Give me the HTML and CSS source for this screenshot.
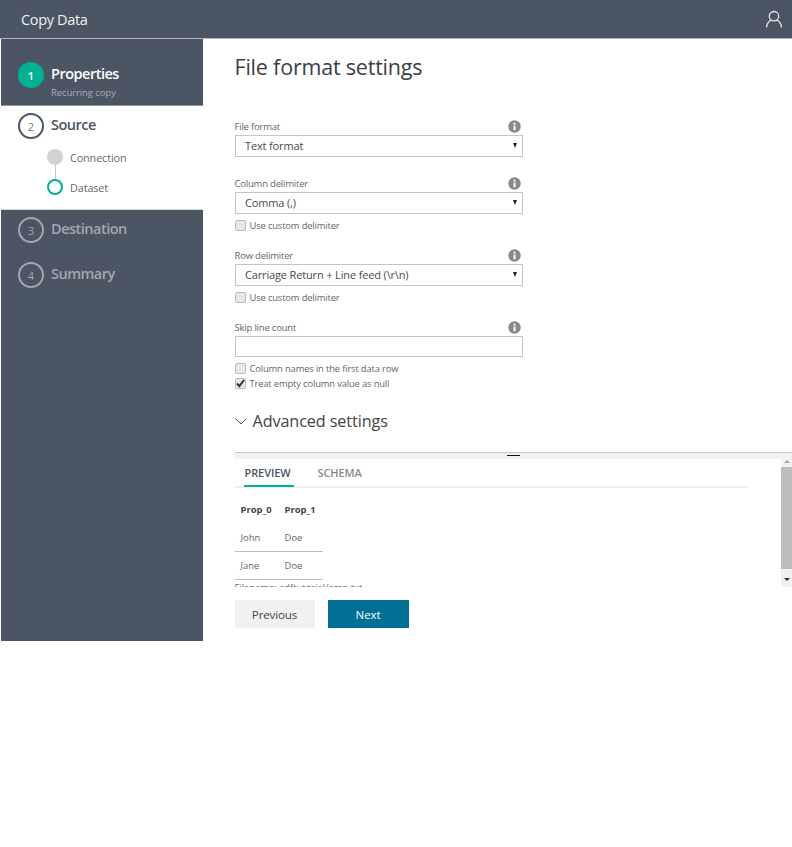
FILE: index.html
```html
<!DOCTYPE html>
<html lang="en">
<head>
<meta charset="utf-8">
<title>Copy Data</title>
<link rel="stylesheet" href="styles.css">
</head>
<body>
<div class="app">
  <header class="topbar">
    <span class="app-title">Copy Data</span>
    <svg class="user-icon" width="18" height="18" viewBox="0 0 18 18" fill="none" stroke="#e6e8ea" stroke-width="1.3"><circle cx="9" cy="6.2" r="4.7"/><path d="M1.6 17.4c0-4.2 3-6.9 4.9-7.2M16.4 17.4c0-4.2-3-6.9-4.9-7.2"/></svg>
  </header>
  <div class="body">
    <nav class="sidebar">
      <div class="step step-done">
        <span class="badge badge-done">1</span>
        <div class="step-text"><div class="step-name">Properties</div><div class="step-sub">Recurring copy</div></div>
      </div>
      <div class="step-active">
        <div class="step-active-head">
          <span class="badge badge-active">2</span>
          <div class="step-name">Source</div>
        </div>
        <div class="substeps">
          <div class="substep"><span class="dot dot-filled"></span><span>Connection</span></div>
          <div class="substep"><span class="dot dot-current"></span><span>Dataset</span></div>
        </div>
      </div>
      <div class="step step-todo"><span class="badge badge-todo">3</span><div class="step-name">Destination</div></div>
      <div class="step step-todo"><span class="badge badge-todo">4</span><div class="step-name">Summary</div></div>
    </nav>
    <main class="main">
      <h1 class="page-title">File format settings</h1>
      <div class="form">
        <div class="field f1">
          <div class="label-row"><label>File format</label><svg class="info" viewBox="0 0 14 14"><circle cx="7" cy="7" r="6.7" fill="#8a8a8a"/><rect x="6" y="6" width="2.1" height="5" fill="#fff"/><rect x="6" y="3" width="2.1" height="2" fill="#fff"/></svg></div>
          <div class="select"><span>Text format</span><i class="arrow"></i></div>
        </div>
        <div class="field f2">
          <div class="label-row"><label>Column delimiter</label><svg class="info" viewBox="0 0 14 14"><circle cx="7" cy="7" r="6.7" fill="#8a8a8a"/><rect x="6" y="6" width="2.1" height="5" fill="#fff"/><rect x="6" y="3" width="2.1" height="2" fill="#fff"/></svg></div>
          <div class="select"><span>Comma (,)</span><i class="arrow"></i></div>
          <div class="check check-first"><span class="box"></span><span>Use custom delimiter</span></div>
        </div>
        <div class="field f3">
          <div class="label-row"><label>Row delimiter</label><svg class="info" viewBox="0 0 14 14"><circle cx="7" cy="7" r="6.7" fill="#8a8a8a"/><rect x="6" y="6" width="2.1" height="5" fill="#fff"/><rect x="6" y="3" width="2.1" height="2" fill="#fff"/></svg></div>
          <div class="select"><span>Carriage Return + Line feed (\r\n)</span><i class="arrow"></i></div>
          <div class="check check-first"><span class="box"></span><span>Use custom delimiter</span></div>
        </div>
        <div class="field f3">
          <div class="label-row"><label>Skip line count</label><svg class="info" viewBox="0 0 14 14"><circle cx="7" cy="7" r="6.7" fill="#8a8a8a"/><rect x="6" y="6" width="2.1" height="5" fill="#fff"/><rect x="6" y="3" width="2.1" height="2" fill="#fff"/></svg></div>
          <div class="text-input"></div>
          <div class="check check-first"><span class="box"></span><span>Column names in the first data row</span></div>
          <div class="check check-next"><span class="box box-on"><svg width="11" height="11" viewBox="0 0 11 11" fill="none" stroke="#333" stroke-width="2"><path d="M2 5.5l2.4 2.6L9 2"/></svg></span><span>Treat empty column value as null</span></div>
        </div>
      </div>
      <div class="advanced">
        <svg class="chev" width="12" height="7" viewBox="0 0 12 7" fill="none" stroke="#555" stroke-width="1"><path d="M.7.7L6 6l5.3-5.3"/></svg>
        <span>Advanced settings</span>
      </div>
      <section class="panel">
        <div class="splitter"><i class="grip"></i></div>
        <div class="panel-body">
          <div class="panel-content">
            <div class="tabs"><span class="tab tab-on">PREVIEW</span><span class="tab">SCHEMA</span></div>
            <table class="grid">
              <thead><tr><th>Prop_0</th><th>Prop_1</th></tr></thead>
              <tbody><tr><td>John</td><td>Doe</td></tr><tr><td>Jane</td><td>Doe</td></tr></tbody>
            </table>
            <div class="filename">Filename: adftutorial/emp.txt</div>
          </div>
          <div class="scrollbar"><i class="sb-up"></i><i class="sb-thumb"></i><i class="sb-down"></i></div>
        </div>
      </section>
      <div class="actions"><button class="btn btn-prev">Previous</button><button class="btn btn-next">Next</button></div>
    </main>
  </div>
</div>
</body>
</html>
```
FILE: styles.css
```css
* { box-sizing: border-box; }
html, body { margin: 0; padding: 0; background: #fff; }
body { font-family: "Open Sans", "Noto Sans", sans-serif; color: #444; }
.app { height: 641px; display: flex; flex-direction: column; overflow: hidden; }
.topbar { height: 39px; flex: none; background: #4b5563; border-bottom: 1px solid #b4b8be; display: flex; align-items: center; justify-content: space-between; padding: 0 9px 2px 21px; }
.app-title { color: #f0f1f2; font-size: 14.5px; letter-spacing: -.35px; margin-top: 2px; }
.user-icon { display: block; margin-top: 2px; }
.body { flex: 1; display: flex; min-height: 0; }
.sidebar { width: 201.5px; margin-left: 1px; flex: none; background: #4b5563; color: #fff; }
.step { height: 45px; display: flex; align-items: flex-start; padding: 7px 0 0 17px; gap: 7px; }
.step-done { height: 67px; padding-top: 23px; border-bottom: 1px solid #8f96a0; }
.badge { width: 26px; height: 26px; flex: none; border-radius: 50%; display: flex; align-items: center; justify-content: center; font-size: 11px; }
.badge-done { background: #00b294; color: #fff; font-weight: 600; }
.badge-active { border: 2px solid #4b5563; color: #777; background: #fff; }
.badge-todo { border: 2px solid #a3a8af; color: #a3a8af; }
.step-name { font-size: 14.5px; font-weight: 600; line-height: 20px; letter-spacing: -.5px; margin-top: 2px; }
.step-done .step-name { color: #fff; }
.step-sub { font-size: 9.5px; line-height: 14px; margin-top: 2px; color: #a9adb3; letter-spacing: -.1px; }
.step-active { height: 104px; background: #fff; color: #4b5563; border-bottom: 1px solid #d5d7da; padding: 7px 0 0 17px; }
.step-active-head { display: flex; gap: 7px; }
.substeps { margin-top: 3px; margin-left: 29px; position: relative; }
.substeps::before { content: ""; position: absolute; left: 7.5px; top: 22px; width: 1px; height: 16px; background: #c8c8c8; }
.substep { height: 30px; display: flex; align-items: center; gap: 7px; font-size: 10.8px; color: #5f6770; position: relative; letter-spacing: -.1px; }
.dot { width: 16px; height: 16px; flex: none; border-radius: 50%; background: #fff; }
.dot-filled { background: #d2d2d2; }
.dot-current { border: 2px solid #00b294; }
.step-todo { color: #a3a8af; }
.main { flex: 1; min-width: 0; padding-left: 32px; }
.page-title { margin: 0; padding-top: 13px; height: 78px; font-size: 21.5px; font-weight: 400; line-height: 30px; color: #3c4043; letter-spacing: -.2px; }
.form { width: 288px; }
.label-row { height: 18px; display: flex; align-items: center; justify-content: space-between; font-size: 9.5px; color: #666; letter-spacing: -.2px; }
.info { width: 13px; height: 13px; margin-right: 2px; display: block; }
.select { height: 22px; border: 1px solid #c4c4c4; display: flex; align-items: center; justify-content: space-between; padding: 0 5px 2px 9.5px; font-size: 11px; color: #4a4a4a; letter-spacing: -.15px; }
.text-input { height: 21px; border: 1px solid #c4c4c4; }
.arrow { width: 0; height: 0; border-left: 2.5px solid transparent; border-right: 2.5px solid transparent; border-top: 5px solid #222; }
.check { display: flex; align-items: center; gap: 3px; font-size: 9.4px; color: #666; height: 14px; letter-spacing: -.15px; }
.check-first { margin-top: 4px; }
.check-next { margin-top: 1px; }
.box { width: 11px; height: 11px; border: 1px solid #bbb; border-radius: 2px; background: #e8e8e8; display: block; flex: none; margin-right: 1px; }
.box-on svg { display: block; margin: -1px; }
.f2 { margin-top: 17px; }
.f3 { margin-top: 14px; }
.advanced { margin-top: 19px; height: 24px; display: flex; align-items: center; gap: 6px; font-size: 16.2px; color: #444; letter-spacing: -.1px; }
.panel { margin-top: 19px; }
.splitter { height: 7px; background: #f1f1f1; border-top: 1px solid #c5c5c5; position: relative; }
.grip { position: absolute; left: 272px; top: 2px; width: 13px; height: 1px; background: #111; }
.panel-body { height: 128px; display: flex; }
.panel-content { flex: 1; overflow: hidden; }
.tabs { margin-right: 33px; height: 29px; border-bottom: 2px solid #eee; display: flex; padding-left: 9px; gap: 23px; font-size: 11px; font-weight: 600; letter-spacing: -.1px; }
.tab { height: 28px; padding: 6px 1px 0; color: #8a8a8a; }
.tab-on { color: #4b5563; border-bottom: 2px solid #00b294; width: 50px; }
.grid { border-collapse: collapse; margin-top: 7px; font-size: 9.4px; }
.grid th { text-align: left; font-weight: 700; color: #444; height: 28px; padding: 0 6px; }
.grid td { height: 28px; padding: 1px 6px 0; border-bottom: 1px solid #bbb; color: #666; }
.grid th + th, .grid td + td { padding-left: 7px; padding-right: 7px; width: 44px; }
.filename { font-size: 9.4px; color: #666; line-height: 13px; padding-top: 1px; }
.scrollbar { width: 11px; flex: none; background: #f1f1f1; position: relative; display: flex; flex-direction: column; align-items: center; }
.sb-up { width: 0; height: 0; border-left: 3px solid transparent; border-right: 3px solid transparent; border-bottom: 3px solid #a8a8a8; margin-bottom: 4px; margin-top: 1px; }
.sb-thumb { width: 100%; height: 102px; background: #bdbdbd; }
.sb-down { margin-top: 9px; width: 0; height: 0; border-left: 3px solid transparent; border-right: 3px solid transparent; border-top: 3px solid #333; }
.actions { display: flex; gap: 13px; margin-top: 13px; }
.btn { width: 80px; height: 28px; border: 0; font: inherit; font-size: 11.5px; padding: 0; letter-spacing: -.1px; }
.btn-prev { background: #f1f1f1; color: #444; }
.btn-next { background: #006f94; color: #fff; width: 81px; }
```
